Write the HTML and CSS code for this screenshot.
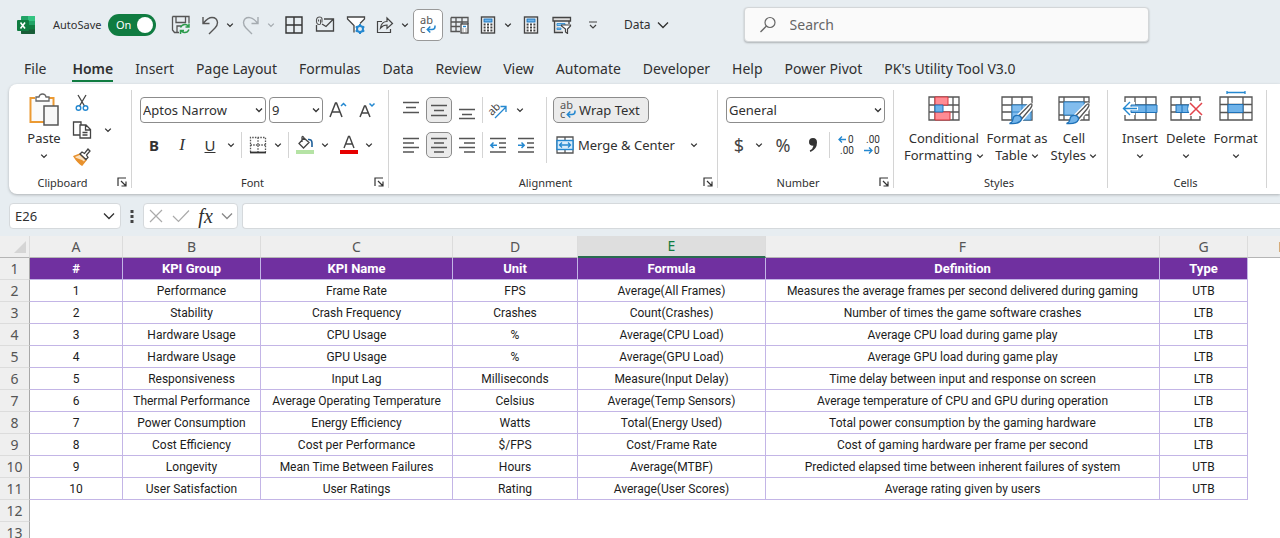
FILE: index.html
```html
<!DOCTYPE html>
<html lang="en">
<head>
    <meta charset="UTF-8">
    <meta name="viewport" content="width=device-width, initial-scale=1.0">
    <title>Gaming KPI - Excel</title>
    <link rel="stylesheet" href="styles.css">
</head>
<body>

    <!-- shared icons -->
    <svg class="sprite" aria-hidden="true">
        <symbol id="chev" viewBox="0 0 8 8"><path d="M1.2 2.6 4 5.4 6.8 2.6" fill="none" stroke="currentColor" stroke-width="1.3"/></symbol>
        <symbol id="chev-lg" viewBox="0 0 12 8"><path d="M1 1.5 6 6.5 11 1.5" fill="none" stroke="currentColor" stroke-width="1.3"/></symbol>
        <symbol id="launch" viewBox="0 0 10 10"><path d="M1 9V1H9M4 4 8.5 8.5M9 4.5V9H4.5" fill="none" stroke="#333" stroke-width="1.2"/></symbol>
        <symbol id="abc" viewBox="0 0 18 18">
            <text x="1" y="8" font-family="Noto Sans" font-size="11" fill="#555">ab</text>
            <text x="1" y="17" font-family="Noto Sans" font-size="11" fill="#555">c</text>
            <path d="M16 9.500v1q0 3-3 3H8.500M11.300 10.500 8.300 13.500l3 3" fill="none" stroke="#2488d0" stroke-width="1.500"/>
        </symbol>
        <symbol id="calc" viewBox="0 0 16 18">
            <rect x="1.500" y="1" width="13" height="16" fill="#fff" stroke="#444" stroke-width="1.400"/>
            <rect x="4" y="3" width="8" height="3" fill="#6cb3ec" stroke="#1e74ba"/>
            <path d="M3.600 8.500h2M7 8.500h2M10.400 8.500h2M3.600 11.500h2M7 11.500h2M10.400 11.500h2M3.600 14.500h2M7 14.500h2M10.400 14.500h2" stroke="#444" stroke-width="2"/>
        </symbol>
        <symbol id="brush" viewBox="0 0 26 26">
            <path d="M23 3.500q2 1-1 5l-8 9-3-3 8-8q3-3.500 4-3z" fill="#fff" stroke="#fff" stroke-width="4"/>
            <path d="M23.500 3q1.500 1-1.500 5l-8 9.500-3-3L19 6.500Q22.500 2.500 23.500 3z" fill="#fff" stroke="#555" stroke-width="1.300"/>
            <path d="M10.500 14.500q3 .5 3 4-2 5-12 4 3-1 3.500-4.500.5-4 5.500-3.500z" fill="#72b4ea" stroke="#1f72b8" stroke-width="1.300"/>
        </symbol>
    </svg>

    <header class="titlebar">
        <svg class="logo" width="18" height="18" viewBox="0 0 18 18">
            <rect x="4" y="0" width="14" height="18" rx="1" fill="#21a366"/>
            <path d="M11 0h6q1 0 1 1v4h-7z" fill="#33c481"/>
            <path d="M4 5h7v4H4z" fill="#107c41"/>
            <path d="M4 9h14v8q0 1-1 1H5q-1 0-1-1z" fill="#185c37"/>
            <path d="M11 9h7v4.500h-7z" fill="#107c41"/>
            <rect x="0" y="4" width="12" height="11" rx="1" fill="#107c41"/>
            <path d="M3.500 6.500l4.500 6M8 6.500l-4.500 6" stroke="#fff" stroke-width="1.600"/>
        </svg>
        <label class="autosave" for="autosave">AutoSave</label>
        <span class="switch">
            <input type="checkbox" id="autosave" checked>
            <span>On</span>
        </span>

        <div class="quick">
            <button class="qbtn" aria-label="Save">
                <svg width="20" height="20" viewBox="0 0 20 20"><path d="M1.500 1.500h16.500V8M1.500 1.500v13.500l2 2.500H8M5 1.500V7.500h9.500V1.500M6 17v-6h4" fill="none" stroke="#555" stroke-width="1.300"/><path d="M9.500 12.500q1.500-3.500 5-3 2 .3 3 2M18 8.500v3.500h-3.500M18 14.500q-1.500 3.500-5 3-2-.3-3-2M9.500 19v-3.500H13" fill="none" stroke="#2c9b4b" stroke-width="1.500"/></svg>
            </button>
            <button class="qmain" aria-label="Undo">
                <svg width="18" height="20" viewBox="0 0 18 20"><path d="M2 2v6.500h6.500M2.500 8Q7 2.500 11 2.500q5 0 5.500 5 0 3-2.500 5.500l-6 6" fill="none" stroke="#555" stroke-width="1.400"/></svg>
            </button>
            <button class="qdrop" aria-label="Undo list"><svg class="ch"><use href="#chev"/></svg></button>
            <button class="qmain faded" aria-label="Redo">
                <svg width="18" height="20" viewBox="0 0 18 20"><path d="M16 2v6.500H9.500M15.500 8Q11 2.500 7 2.500q-5 0-5.500 5 0 3 2.500 5.500l6 6" fill="none" stroke="currentColor" stroke-width="1.400"/></svg>
            </button>
            <button class="qdrop faded" aria-label="Redo list"><svg class="ch"><use href="#chev"/></svg></button>
            <button class="qbtn" aria-label="Borders">
                <svg width="18" height="18" viewBox="0 0 18 18"><path d="M1 1h16v16H1zM9 1v16M1 9h16" fill="none" stroke="#333" stroke-width="1.400"/></svg>
            </button>
            <button class="qbtn" aria-label="Email">
                <svg width="20" height="18" viewBox="0 0 20 18"><path d="M9 3h9.500v12h-17V9M7 8l4 2.500L18.500 3" fill="none" stroke="#444" stroke-width="1.300"/><path d="M3.500 5.500v-2M7 6.500V3q0-2-2.500-2T1.500 3.500V6Q2 8.500 4 8.500t1.500-2V3.500" fill="none" stroke="#555" stroke-width="1.100"/></svg>
            </button>
            <button class="qbtn" aria-label="Filter settings">
                <svg width="20" height="20" viewBox="0 0 20 20"><path d="M8 17.500V10.500L1.500 4V2h17v2L14 8.500" fill="#fff" stroke="#444" stroke-width="1.300"/><circle cx="14" cy="14" r="3" fill="none" stroke="#2488d0" stroke-width="2"/><path d="M14 9v2M14 17v2M9.700 11.500l1.700 1M16.600 15.500l1.700 1M9.700 16.500l1.700-1M16.600 12.500l1.700-1" stroke="#2488d0" stroke-width="2"/></svg>
            </button>
            <button class="qmain" aria-label="Share">
                <svg width="18" height="18" viewBox="0 0 18 18"><path d="M6 5.500H1.500v11h13V13M4.500 12Q5.500 5.500 11 5.500V2l5.500 5.500L11 12.500V9Q7 9 4.500 12z" fill="none" stroke="#444" stroke-width="1.200"/></svg>
            </button>
            <button class="qdrop" aria-label="Share options"><svg class="ch"><use href="#chev"/></svg></button>
            <button class="qbtn pressed" aria-label="Wrap"><svg width="18" height="18"><use href="#abc"/></svg></button>
            <button class="qbtn" aria-label="Calculated table">
                <svg width="19" height="18" viewBox="0 0 19 18"><path d="M1 1.500h17V8M1 1.500v14h9M1 6h17M1 10.500h9M6 1.500v14M12 1.500V8" fill="none" stroke="#555" stroke-width="1.300"/><rect x="11" y="8" width="7" height="9" fill="#fff" stroke="#444" stroke-width="1.300"/><path d="M13 10.500h3" stroke="#2488d0" stroke-width="1.400"/><path d="M12.500 13h1M15.500 13h1M12.500 15h1M15.500 15h1" stroke="#444"/></svg>
            </button>
            <button class="qmain" aria-label="Calculate"><svg width="16" height="18"><use href="#calc"/></svg></button>
            <button class="qdrop" aria-label="Calculate options"><svg class="ch"><use href="#chev"/></svg></button>
            <button class="qbtn" aria-label="Calculator"><svg width="16" height="18"><use href="#calc"/></svg></button>
            <button class="qbtn" aria-label="Filter form">
                <svg width="20" height="18" viewBox="0 0 20 18"><path d="M1 1.500h17.500v3.500H1zM2.500 5v11.500H11M17 5v3" fill="#ddd" stroke="#444" stroke-width="1.300"/><path d="M5 7.500h8v2H5zM5 12h4v1.500H5z" fill="#8cc4f0" stroke="#2488d0" stroke-width=".8"/><path d="M9.500 9h9v1l-3 3v4.500l-2-1.500v-3l-4-3z" fill="#fff" stroke="#444" stroke-width="1.200"/></svg>
            </button>
            <button class="qbtn" aria-label="Customize toolbar">
                <svg width="10" height="10" viewBox="0 0 10 10"><path d="M1 2h8M2 5l3 3 3-3" fill="none" stroke="#444" stroke-width="1.200"/></svg>
            </button>
        </div>

        <button class="filename">Data <svg width="12" height="8"><use href="#chev-lg"/></svg></button>

        <div class="search">
            <svg width="18" height="18" viewBox="0 0 18 18"><circle cx="11" cy="6.500" r="5" fill="none" stroke="#666" stroke-width="1.200"/><path d="M7.500 10 1.500 16" stroke="#666" stroke-width="1.300"/></svg>
            <input type="text" placeholder="Search" aria-label="Search">
        </div>
    </header>

    <nav class="tabs">
        <a href="#" class="file">File</a>
        <a href="#" class="active">Home</a>
        <a href="#">Insert</a>
        <a href="#">Page Layout</a>
        <a href="#">Formulas</a>
        <a href="#">Data</a>
        <a href="#">Review</a>
        <a href="#">View</a>
        <a href="#">Automate</a>
        <a href="#">Developer</a>
        <a href="#">Help</a>
        <a href="#">Power Pivot</a>
        <a href="#">PK's Utility Tool V3.0</a>
    </nav>

    <section class="ribbon">
        <div class="group clipboard">
            <div class="tools">
                <button class="big paste">
                    <svg width="32" height="34" viewBox="0 0 32 34"><path d="M7 5H2.500v24H16M21 5h4.500v8" fill="none" stroke="#eb9a33" stroke-width="2"/><path d="M4 6.500h20V13h-8v15H4z" fill="#fafafa"/><path d="M8 8V4h3q.5-3 3.500-3T18 4h3v4z" fill="#fff" stroke="#666" stroke-width="1.300"/><rect x="16" y="13" width="14" height="19" fill="#f7f7f7" stroke="#555" stroke-width="1.500"/></svg>
                    <span>Paste</span>
                    <svg class="ch"><use href="#chev"/></svg>
                </button>
                <div class="clips">
                    <button aria-label="Cut">
                        <svg width="14" height="18" viewBox="0 0 14 18"><path d="M3 1l6.500 11M11 1 4.500 12" stroke="#444" stroke-width="1.300"/><circle cx="3.500" cy="14" r="2.300" fill="none" stroke="#2488d0" stroke-width="1.400"/><circle cx="10.500" cy="14" r="2.300" fill="none" stroke="#2488d0" stroke-width="1.400"/></svg>
                    </button>
                    <div class="row">
                        <button aria-label="Copy">
                            <svg width="20" height="20" viewBox="0 0 20 20"><path d="M8 15H1.500V2H9v3M8 5h6l4.500 4.500V18H8zM13.500 5v5h5M10.500 12.500h5M10.500 15h5" fill="#fff" stroke="#444" stroke-width="1.300"/></svg>
                        </button>
                        <button class="drop" aria-label="Copy options"><svg class="ch"><use href="#chev"/></svg></button>
                    </div>
                    <button aria-label="Format Painter">
                        <svg width="18" height="18" viewBox="0 0 18 18"><path d="M1 8.500 7 6l6 6-4 5Q5 15 1 8.500z" fill="#fce1bd" stroke="#e8912d" stroke-width="1.400"/><path d="M2 9.500l7 2.500 2.500 2L9 17Q4 14 2 9.500z" fill="#e8912d"/><path d="M7 6l2-2 2.500 1.500L15 1l2 2-3.500 4 1.500 2.500-2 2z" fill="#fff" stroke="#444" stroke-width="1.300"/></svg>
                    </button>
                </div>
            </div>
            <footer><span>Clipboard</span><button class="launcher" aria-label="Clipboard settings"><svg width="10" height="10"><use href="#launch"/></svg></button></footer>
        </div>

        <div class="group font">
            <div class="tools lines">
                <div class="row gap">
                    <select class="combo font-name" aria-label="Font"><option>Aptos Narrow</option></select>
                    <select class="combo font-size" aria-label="Font size"><option>9</option></select>
                    <button class="ib" aria-label="Increase font size">
                        <svg width="20" height="20" viewBox="0 0 20 20"><path d="M2 17 7.500 3h1L14 17M4 12h8" fill="none" stroke="#444" stroke-width="1.500"/><path d="M13 6l2.500-2.500L18 6" fill="none" stroke="#2488d0" stroke-width="1.500"/></svg>
                    </button>
                    <button class="ib" aria-label="Decrease font size">
                        <svg width="20" height="20" viewBox="0 0 20 20"><path d="M3 17 7.500 6h1L13 17M4.800 13h6.500" fill="none" stroke="#444" stroke-width="1.500"/><path d="M12.500 3.500 15 6l2.500-2.500" fill="none" stroke="#2488d0" stroke-width="1.500"/></svg>
                    </button>
                </div>
                <div class="row">
                    <button class="letter"><b>B</b></button>
                    <button class="letter"><i>I</i></button>
                    <button class="letter"><u>U</u></button>
                    <button class="drop" aria-label="Underline options"><svg class="ch"><use href="#chev"/></svg></button>
                    <span class="sep"></span>
                    <button class="ib" aria-label="Borders">
                        <svg width="18" height="18" viewBox="0 0 18 18"><path d="M1.500 16V1.500h15V16M9 1.500V16M1.500 9h15" fill="none" stroke="#555" stroke-width="1.300" stroke-dasharray="1.500 1.200"/><path d="M1 16.500h16" stroke="#333" stroke-width="1.800"/></svg>
                    </button>
                    <button class="drop" aria-label="Border options"><svg class="ch"><use href="#chev"/></svg></button>
                    <span class="sep"></span>
                    <button class="ib" aria-label="Fill color">
                        <svg width="20" height="20" viewBox="0 0 20 20"><path d="M9 3 4 8.500 8.500 13 14 7.500 9 3Q8 .5 7 2v5" fill="#fff" stroke="#444" stroke-width="1.300"/><path d="M13 4.500q4-.5 4 3.500v4" fill="none" stroke="#1f5f99" stroke-width="1.600"/><path d="M1 15h18v4H1z" fill="#b5e3a5"/></svg>
                    </button>
                    <button class="drop" aria-label="Fill options"><svg class="ch"><use href="#chev"/></svg></button>
                    <button class="ib spaced" aria-label="Font color">
                        <svg width="20" height="20" viewBox="0 0 20 20"><path d="M5 13 9.500 1.500h1L15 13M6.500 9h7" fill="none" stroke="#444" stroke-width="1.400"/><path d="M1 15h18v4H1z" fill="#e60000"/></svg>
                    </button>
                    <button class="drop" aria-label="Font color options"><svg class="ch"><use href="#chev"/></svg></button>
                </div>
            </div>
            <footer><span>Font</span><button class="launcher" aria-label="Font settings"><svg width="10" height="10"><use href="#launch"/></svg></button></footer>
        </div>

        <div class="group alignment">
            <div class="tools">
                <div class="lines">
                    <div class="row tight">
                        <button class="ib" aria-label="Top align"><svg width="18" height="20" viewBox="0 0 18 20"><path d="M1 2.500h16M4 7.500h10M1 12.500h16" stroke="#555" stroke-width="1.400"/></svg></button>
                        <button class="ib on" aria-label="Middle align"><svg width="18" height="20" viewBox="0 0 18 20"><path d="M1 5.500h16M4 10.500h10M1 15.500h16" stroke="#555" stroke-width="1.400"/></svg></button>
                        <button class="ib" aria-label="Bottom align"><svg width="18" height="20" viewBox="0 0 18 20"><path d="M1 9.500h16M4 14.500h10M1 18.500h16" stroke="#555" stroke-width="1.400"/></svg></button>
                        <span class="sep"></span>
                        <button class="ib" aria-label="Orientation"><svg class="tilt" width="20" height="20" viewBox="0 0 20 20"><text x="0" y="13" transform="rotate(-45 6 10)" font-family="Noto Sans" font-size="11" fill="#444">ab</text><path d="M7 18 18 7M12.500 6.500H18V12" fill="none" stroke="#2488d0" stroke-width="1.300"/></svg></button>
                        <button class="drop" aria-label="Orientation options"><svg class="ch"><use href="#chev"/></svg></button>
                    </div>
                    <div class="row tight">
                        <button class="ib" aria-label="Align left"><svg width="18" height="18" viewBox="0 0 18 18"><path d="M1 2.500h16M1 7h11M1 11.500h16M1 16h11" stroke="#555" stroke-width="1.400"/></svg></button>
                        <button class="ib on" aria-label="Center"><svg width="18" height="18" viewBox="0 0 18 18"><path d="M1 2.500h16M4 7h10M1 11.500h16M4 16h10" stroke="#555" stroke-width="1.400"/></svg></button>
                        <button class="ib" aria-label="Align right"><svg width="18" height="18" viewBox="0 0 18 18"><path d="M1 2.500h16M6 7h11M1 11.500h16M6 16h11" stroke="#555" stroke-width="1.400"/></svg></button>
                        <span class="sep"></span>
                        <button class="ib" aria-label="Decrease indent"><svg width="18" height="18" viewBox="0 0 18 18"><path d="M1 2.500h16M10 7h7M10 11.500h7M1 16h16" stroke="#555" stroke-width="1.400"/><path d="M8 9.200H2M4.500 6.500 1.800 9.200l2.700 2.700" fill="none" stroke="#2488d0" stroke-width="1.500"/></svg></button>
                        <button class="ib" aria-label="Increase indent"><svg width="18" height="18" viewBox="0 0 18 18"><path d="M1 2.500h16M10 7h7M10 11.500h7M1 16h16" stroke="#555" stroke-width="1.400"/><path d="M1 9.200h6M4.500 6.500l2.700 2.700-2.700 2.700" fill="none" stroke="#2488d0" stroke-width="1.500"/></svg></button>
                    </div>
                </div>
                <span class="sep tall"></span>
                <div class="lines wrapcol">
                    <button class="textbtn on"><svg width="18" height="18"><use href="#abc"/></svg>Wrap Text</button>
                    <div class="row">
                        <button class="textbtn merge"><svg width="18" height="18" viewBox="0 0 18 18"><path d="M1 1h16v16H1zM9 1v3M9 14v3" fill="#fff" stroke="#555" stroke-width="1.300"/><rect x="1" y="4.500" width="16" height="9" fill="#d9ecfa" stroke="#2488d0" stroke-width="1.400"/><path d="M3.500 9h11M6 6.500 3.500 9 6 11.500M12 6.500 14.500 9 12 11.500" fill="none" stroke="#2488d0" stroke-width="1.300"/></svg>Merge &amp; Center</button>
                        <button class="drop" aria-label="Merge options"><svg class="ch"><use href="#chev"/></svg></button>
                    </div>
                </div>
            </div>
            <footer><span>Alignment</span><button class="launcher" aria-label="Alignment settings"><svg width="10" height="10"><use href="#launch"/></svg></button></footer>
        </div>

        <div class="group number">
            <div class="tools lines">
                <select class="combo" aria-label="Number format"><option>General</option></select>
                <div class="row">
                    <button class="ib sign">$</button>
                    <button class="drop" aria-label="Currency options"><svg class="ch"><use href="#chev"/></svg></button>
                    <button class="ib sign spaced">%</button>
                    <button class="ib spaced" aria-label="Comma style"><svg width="10" height="18" viewBox="0 0 10 18"><path d="M5 2q4 0 4 4.500Q9 13 2.500 16l-.8-1.500Q5 13 5.500 9.800 1 10 1 6t4-4z" fill="#333"/></svg></button>
                    <span class="sep"></span>
                    <button class="ib" aria-label="Increase decimal"><svg width="18" height="22" viewBox="0 0 18 22"><text x="11" y="9" font-family="Roboto" font-size="10" fill="#333">0</text><text x="3" y="20" font-family="Roboto" font-size="10" fill="#333">.00</text><path d="M9 5.500H2M5 2.500l-3 3 3 3" fill="none" stroke="#2488d0" stroke-width="1.300"/></svg></button>
                    <button class="ib" aria-label="Decrease decimal"><svg width="18" height="22" viewBox="0 0 18 22"><text x="3" y="9" font-family="Roboto" font-size="10" fill="#333">.00</text><text x="11" y="20" font-family="Roboto" font-size="10" fill="#333">0</text><path d="M1 16.500h8M6 13.500l3 3-3 3" fill="none" stroke="#2488d0" stroke-width="1.300"/></svg></button>
                </div>
            </div>
            <footer><span>Number</span><button class="launcher" aria-label="Number settings"><svg width="10" height="10"><use href="#launch"/></svg></button></footer>
        </div>

        <div class="group styles">
            <div class="tools">
                <button class="big">
                    <svg width="34" height="32" viewBox="0 0 34 32"><path d="M2 2h30v23H2zM2 10h30M2 17h30M8 2v23M26 2v23" fill="#fff" stroke="#555" stroke-width="1.300"/><path d="M8 2h13v8H8zM8 17h15v8H8z" fill="#ff8c94" stroke="#d9363e"/><path d="M8 10h8v7H8z" fill="#6cb3ec" stroke="#1f72b8"/></svg>
                    <span>Conditional</span><span>Formatting <svg class="ch"><use href="#chev"/></svg></span>
                </button>
                <button class="big">
                    <svg width="34" height="32" viewBox="0 0 34 32"><path d="M2 2h30v23H2zM2 10h30M2 17h30M12 2v23M22 2v23" fill="#fff" stroke="#555" stroke-width="1.300"/><path d="M12 10h19v15H12zM12 17h19M22 10v15" fill="#82bdee" stroke="#2f86cc"/><svg x="8" y="6" width="26" height="26"><use href="#brush"/></svg></svg>
                    <span>Format as</span><span>Table <svg class="ch"><use href="#chev"/></svg></span>
                </button>
                <button class="big">
                    <svg width="34" height="32" viewBox="0 0 34 32"><path d="M2 2h30v23H2zM2 7h30M2 20h30M7 2v23M27 2v23" fill="#fff" stroke="#555" stroke-width="1.300"/><path d="M7 7h20v13H7z" fill="#82bdee" stroke="#2f86cc"/><svg x="8" y="6" width="26" height="26"><use href="#brush"/></svg></svg>
                    <span>Cell</span><span>Styles <svg class="ch"><use href="#chev"/></svg></span>
                </button>
            </div>
            <footer><span>Styles</span></footer>
        </div>

        <div class="group cells">
            <div class="tools">
                <button class="big">
                    <svg width="36" height="32" viewBox="0 0 36 32"><path d="M3 2h31v23H3zM3 10h31M3 17h31M13 2v23M24 2v23" fill="#fff" stroke="#555" stroke-width="1.300"/><path d="M1 7h12v13H1z" fill="#fff"/><path d="M9 10h26v7.500H9zM24 10v7.500" fill="#6fb3ea" stroke="#1f72b8"/><path d="M16 13.500H2M8 7l-6.500 6.500L8 20" fill="none" stroke="#fff" stroke-width="3.500"/><path d="M15 13.500H2M8 7l-6.500 6.500L8 20" fill="none" stroke="#2488d0" stroke-width="1.400"/></svg>
                    <span>Insert</span><svg class="ch"><use href="#chev"/></svg>
                </button>
                <button class="big">
                    <svg width="36" height="32" viewBox="0 0 36 32"><path d="M3 2h29v23H3zM3 10h29M3 17h29M13 2v23M23 2v23" fill="#fff" stroke="#555" stroke-width="1.300"/><path d="M8 10h15v7.500H8zM14 10v7.500M20 10v7.500" fill="#6fb3ea" stroke="#1f72b8"/><path d="M22 6h13v15H22l-2-7z" fill="#fff"/><path d="M22 8l12 12M34 8 22 20" stroke="#e2434b" stroke-width="1.500"/></svg>
                    <span>Delete</span><svg class="ch"><use href="#chev"/></svg>
                </button>
                <button class="big">
                    <svg class="ruled" width="36" height="32" viewBox="0 0 36 32"><path d="M2 2h32v23H2zM2 9.500h32M2 17.500h32M10 2v23M25 2v23" fill="#fff" stroke="#555" stroke-width="1.300"/><path d="M10 9.500h15v8H10z" fill="#6fb3ea" stroke="#1f72b8"/><path d="M9-4v3M9-2.500h18M27-4v3" stroke="#2488d0" stroke-width="1.300"/></svg>
                    <span>Format</span><svg class="ch"><use href="#chev"/></svg>
                </button>
            </div>
            <footer><span>Cells</span></footer>
        </div>
    </section>

    <section class="formula-bar">
        <div class="name-box">
            <input type="text" value="E26" aria-label="Name box">
            <button aria-label="Named ranges"><svg width="12" height="8"><use href="#chev-lg"/></svg></button>
        </div>
        <svg class="dots" width="4" height="14" viewBox="0 0 4 14"><path d="M.5 1h3v3h-3zM.5 6h3v3h-3zM.5 11h3v3h-3z" fill="#444"/></svg>
        <div class="fx-box">
            <button aria-label="Cancel"><svg width="16" height="16" viewBox="0 0 16 16"><path d="M2 2l12 12M14 2 2 14" stroke="#aaa" stroke-width="1.200"/></svg></button>
            <button aria-label="Enter"><svg width="18" height="14" viewBox="0 0 18 14"><path d="M1 7l5.500 5.500L17 1.500" fill="none" stroke="#aaa" stroke-width="1.200"/></svg></button>
            <button class="fx">fx</button>
            <button class="fx-drop" aria-label="Functions"><svg width="12" height="8"><use href="#chev-lg"/></svg></button>
        </div>
        <input type="text" class="formula" aria-label="Formula">
    </section>

    <main class="sheet">
        <table>
            <colgroup>
                <col class="c-row"><col class="c-a"><col class="c-b"><col class="c-c"><col class="c-d"><col class="c-e"><col class="c-f"><col class="c-g"><col class="c-h">
            </colgroup>
            <thead>
                <tr>
                    <th class="corner"><svg width="12" height="12" viewBox="0 0 12 12"><path d="M12 0v12H0z" fill="#d5d5d5"/></svg></th>
                    <th>A</th><th>B</th><th>C</th><th>D</th><th class="selected">E</th><th>F</th><th>G</th><th>H</th>
                </tr>
            </thead>
            <tbody>
                <tr class="titles"><th>1</th><td>#</td><td>KPI Group</td><td>KPI Name</td><td>Unit</td><td>Formula</td><td>Definition</td><td>Type</td></tr>
                <tr><th>2</th><td>1</td><td>Performance</td><td>Frame Rate</td><td>FPS</td><td>Average(All Frames)</td><td>Measures the average frames per second delivered during gaming</td><td>UTB</td></tr>
                <tr><th>3</th><td>2</td><td>Stability</td><td>Crash Frequency</td><td>Crashes</td><td>Count(Crashes)</td><td>Number of times the game software crashes</td><td>LTB</td></tr>
                <tr><th>4</th><td>3</td><td>Hardware Usage</td><td>CPU Usage</td><td>%</td><td>Average(CPU Load)</td><td>Average CPU load during game play</td><td>LTB</td></tr>
                <tr><th>5</th><td>4</td><td>Hardware Usage</td><td>GPU Usage</td><td>%</td><td>Average(GPU Load)</td><td>Average GPU load during game play</td><td>LTB</td></tr>
                <tr><th>6</th><td>5</td><td>Responsiveness</td><td>Input Lag</td><td>Milliseconds</td><td>Measure(Input Delay)</td><td>Time delay between input and response on screen</td><td>LTB</td></tr>
                <tr><th>7</th><td>6</td><td>Thermal Performance</td><td>Average Operating Temperature</td><td>Celsius</td><td>Average(Temp Sensors)</td><td>Average temperature of CPU and GPU during operation</td><td>LTB</td></tr>
                <tr><th>8</th><td>7</td><td>Power Consumption</td><td>Energy Efficiency</td><td>Watts</td><td>Total(Energy Used)</td><td>Total power consumption by the gaming hardware</td><td>LTB</td></tr>
                <tr><th>9</th><td>8</td><td>Cost Efficiency</td><td>Cost per Performance</td><td>$/FPS</td><td>Cost/Frame Rate</td><td>Cost of gaming hardware per frame per second</td><td>LTB</td></tr>
                <tr><th>10</th><td>9</td><td>Longevity</td><td>Mean Time Between Failures</td><td>Hours</td><td>Average(MTBF)</td><td>Predicted elapsed time between inherent failures of system</td><td>UTB</td></tr>
                <tr><th>11</th><td>10</td><td>User Satisfaction</td><td>User Ratings</td><td>Rating</td><td>Average(User Scores)</td><td>Average rating given by users</td><td>UTB</td></tr>
                <tr><th>12</th></tr>
                <tr><th>13</th></tr>
            </tbody>
        </table>
    </main>

</body>
</html>
```

FILE: styles.css
```css
* {
    box-sizing: border-box;
}

body {
    margin: 0;
    height: 100vh;
    display: flex;
    flex-direction: column;
    overflow: hidden;
    background-color: #e7edf1;
    color: #303030;
    font-family: "Noto Sans", "Open Sans", sans-serif;
    font-size: 13px;
}

button, input, select {
    font: inherit;
    color: inherit;
}

button {
    display: flex;
    align-items: center;
    justify-content: center;
    padding: 0;
    border: none;
    background: none;
    white-space: nowrap;
}

svg {
    flex: none;
}

.sprite {
    display: none;
}

.ch {
    width: 8px;
    height: 8px;
}

/* title bar */
.titlebar {
    display: flex;
    align-items: center;
    height: 49px;
    padding-left: 17px;
}

.autosave {
    width: 55px;
    margin-left: 18px;
    font-size: 11px;
}

.switch {
    position: relative;
    width: 48px;
    height: 22px;
    margin-right: 10px;
}

.switch input {
    appearance: none;
    display: flex;
    align-items: center;
    justify-content: flex-end;
    width: 48px;
    height: 22px;
    margin: 0;
    padding: 3px;
    border-radius: 11px;
    background-color: #107c41;
}

.switch input::before {
    content: "";
    width: 16px;
    height: 16px;
    border-radius: 50%;
    background-color: #fff;
}

.switch span {
    position: absolute;
    left: 8px;
    top: 3px;
    font-size: 11px;
    line-height: 16px;
    color: #fff;
}

.quick {
    display: flex;
    align-items: center;
}

.qbtn {
    width: 30px;
    height: 32px;
    margin-right: 1px;
}

.qmain {
    width: 25px;
    height: 32px;
}

.qdrop {
    width: 15px;
    height: 32px;
    margin-right: 1px;
}

.faded {
    color: #a5abb0;
}

.pressed {
    border: 1px solid #999;
    border-radius: 5px;
    background-color: #fff;
}

.filename {
    gap: 6px;
    margin-left: 15px;
    font-size: 12px;
}

.search {
    display: flex;
    align-items: center;
    gap: 13px;
    width: 405px;
    height: 35px;
    margin-left: 75px;
    padding: 0 14px;
    border: 1px solid #d3d6d8;
    border-radius: 4px;
    background-color: #fafafa;
    box-shadow: 0 1px 2px rgba(0, 0, 0, 0.25);
}

.search input {
    flex: 1;
    min-width: 0;
    padding: 0;
    border: none;
    background: none;
    font-size: 14px;
}

.search input::placeholder {
    color: #666;
}

/* tabs */
.tabs {
    display: flex;
    height: 35px;
    padding: 7px 0 0 13px;
    font-size: 14px;
}

.tabs a {
    height: 26px;
    margin: 0 11px;
    line-height: 26px;
    color: #303030;
    text-decoration: none;
    white-space: nowrap;
}

.tabs .file {
    margin-right: 15px;
}

.tabs .active {
    border-bottom: 2px solid #107c41;
    font-weight: 600;
}

/* ribbon */
.ribbon {
    display: flex;
    flex: none;
    margin-left: 9px;
    padding: 6px 0;
    border-radius: 8px 0 0 8px;
    background-color: #fff;
    box-shadow: 0 1px 3px rgba(0, 0, 0, 0.25);
}

.group {
    display: flex;
    flex: none;
    flex-direction: column;
    justify-content: space-between;
    height: 98px;
    border-right: 1px solid #d4d4d4;
}

.group footer {
    display: flex;
    align-items: center;
    height: 16px;
    padding-right: 3px;
    margin-bottom: -2px;
    font-size: 11px;
    text-align: center;
}

.group footer span {
    flex: 1;
}

.launcher {
    width: 12px;
    height: 12px;
}

.tools {
    display: flex;
    padding-top: 7px;
}

.lines {
    display: flex;
    flex-direction: column;
    gap: 9px;
}

.row {
    display: flex;
    align-items: center;
}

.gap {
    gap: 3px;
}

.clipboard { width: 123px; }
.font { width: 257px; }
.alignment { width: 329px; }
.number { width: 176px; }
.styles { width: 214px; }
.cells { width: 159px; }

.clipboard .tools {
    gap: 12px;
    padding: 3px 0 0 19px;
}

.clips {
    display: flex;
    flex-direction: column;
    align-items: flex-start;
    gap: 7px;
}

.clips button {
    width: 20px;
    height: 20px;
}

.clips .drop {
    width: 14px;
    margin-left: 9px;
}

.big {
    flex-direction: column;
    justify-content: flex-start;
    line-height: 17px;
}

.big > svg:first-child {
    margin-bottom: 3px;
}

.paste {
    width: 32px;
}

.paste .ch,
.cells .ch {
    margin-top: 5px;
}

.font .tools,
.number .tools {
    padding-left: 8px;
    padding-right: 8px;
}

.combo {
    appearance: none;
    height: 26px;
    padding: 0 16px 0 2px;
    border: 1px solid #8c8c8c;
    border-radius: 4px;
    background: #fff url("data:image/svg+xml,%3Csvg xmlns='http://www.w3.org/2000/svg' width='8' height='8'%3E%3Cpath d='M1 2.500 4 5.500 7 2.500' fill='none' stroke='%23333' stroke-width='1.300'/%3E%3C/svg%3E") no-repeat right 2px center;
}

.font-name {
    width: 127px;
}

.font-size {
    width: 54px;
}

.ib {
    width: 26px;
    height: 26px;
}

.on {
    border: 1px solid #8c8c8c;
    border-radius: 5px;
    background-color: #ebebeb;
}

.letter {
    width: 28px;
    height: 26px;
    font-size: 15px;
    color: #333;
}

.letter i {
    font-family: "Liberation Serif", serif;
    font-size: 17px;
}

.drop {
    width: 14px;
    height: 26px;
}

.sep {
    width: 1px;
    height: 26px;
    margin: 0 3px;
    background-color: #d4d4d4;
}

.spaced {
    margin-left: 4px;
}

.sign {
    font-size: 18px;
    color: #444;
}

.alignment .tools {
    padding-left: 9px;
}

.tight {
    gap: 2px;
}

.tight .sep {
    margin: 0;
}

.tilt {
    overflow: visible;
}

.tall {
    height: 66px;
    margin: 0 6px 0 7px;
}

.wrapcol {
    align-items: flex-start;
}

.textbtn {
    gap: 2px;
    height: 26px;
    padding: 0 8px 0 5px;
}

.merge {
    gap: 4px;
    padding: 0 6px 0 3px;
}

.wrapcol .drop {
    margin-left: 6px;
}

.styles .tools {
    gap: 3px;
    padding-left: 10px;
}

.styles .tools,
.cells .tools {
    padding-top: 5px;
}

.cells .tools {
    gap: 8px;
    padding-left: 14px;
}

.ruled {
    overflow: visible;
}

/* formula bar */
.formula-bar {
    display: flex;
    align-items: center;
    flex: none;
    height: 26px;
    margin: 9px 0 7px 9px;
}

.name-box,
.fx-box,
.formula {
    height: 26px;
    border: 1px solid #d5d9dc;
    border-radius: 4px;
    background-color: #fff;
}

.name-box {
    display: flex;
    width: 112px;
}

.name-box input {
    flex: 1;
    min-width: 0;
    padding: 0 5px;
    border: none;
    background: none;
}

.name-box button {
    width: 22px;
}

.dots {
    margin: 0 9px;
}

.fx-box {
    display: flex;
    align-items: center;
    justify-content: space-around;
    width: 95px;
}

.fx {
    font-family: "Liberation Serif", serif;
    font-size: 20px;
    font-style: italic;
    line-height: 20px;
}

.fx-drop {
    color: #888;
}

.formula {
    flex: 1;
    min-width: 0;
    margin-left: 4px;
    border-right: none;
    border-radius: 4px 0 0 4px;
}

/* sheet */
.sheet {
    flex: 1;
    min-height: 0;
    overflow: hidden;
    background-color: #fff;
}

table {
    width: 1320px;
    table-layout: fixed;
    border-collapse: separate;
    border-spacing: 0;
    font-family: Roboto, sans-serif;
    font-size: 12px;
}

.c-row { width: 30px; }
.c-a { width: 93px; }
.c-b { width: 138px; }
.c-c { width: 192px; }
.c-d { width: 125px; }
.c-e { width: 188px; }
.c-f { width: 394px; }
.c-g { width: 88px; }
.c-h { width: 72px; }

th, td {
    height: 22px;
    padding: 0;
    line-height: 18px;
    text-align: center;
    white-space: nowrap;
}

th {
    background-color: #efefef;
    color: #555;
    font-family: "Noto Sans", sans-serif;
    font-size: 14px;
    font-weight: normal;
}

thead th {
    border-right: 1px solid #dcdcdc;
    border-bottom: 1px solid #b5b5b5;
}

thead .selected {
    border-bottom: 2px solid #2a6b50;
    background-color: #dedede;
    color: #107c41;
}

.corner svg {
    display: block;
    margin-left: 14px;
}

tbody th {
    border-right: 1px solid #a8a8a8;
    border-bottom: 1px solid #dcdcdc;
}

td {
    border-right: 1px solid #c3b5e6;
    border-bottom: 1px solid #c3b5e6;
    color: #1c1c1c;
}

.titles td {
    background-color: #7030a0;
    color: #fff;
    font-size: 13px;
    font-weight: bold;
}
```
